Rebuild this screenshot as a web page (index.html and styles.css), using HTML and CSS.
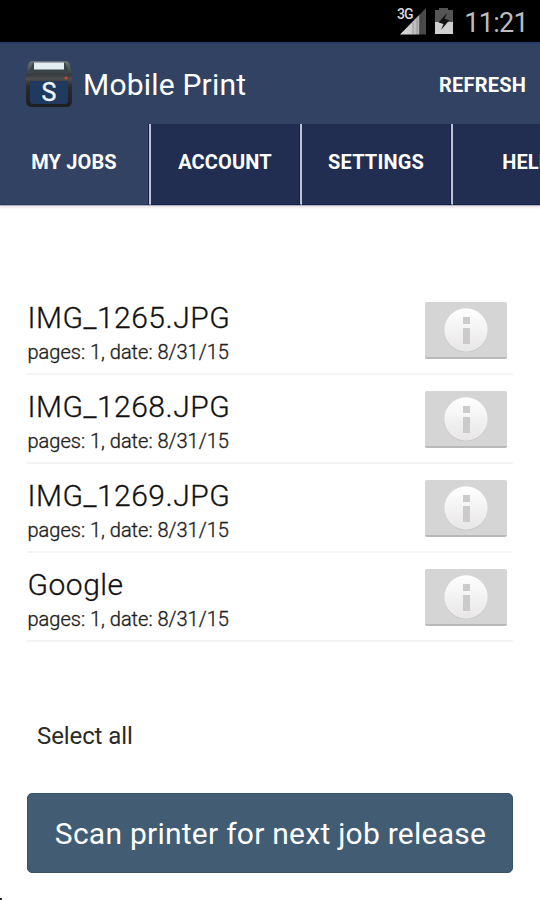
FILE: index.html
```html
<!DOCTYPE html>
<html lang="en">
<head>
<meta charset="utf-8">
<title>Mobile Print</title>
<link rel="stylesheet" href="styles.css">
</head>
<body>
<div class="screen">
  <div class="status">
    <svg class="signal" width="30" height="30" viewBox="0 0 30 30">
      <defs><linearGradient id="sig" x1="0" x2="1"><stop offset="0" stop-color="#e0e0e0"/><stop offset=".5" stop-color="#c8c8c8"/><stop offset=".72" stop-color="#b0b0b0"/><stop offset=".76" stop-color="#454545"/><stop offset="1" stop-color="#4c4c4c"/></linearGradient></defs>
      <path d="M3 28.500L29 2v26.500z" fill="url(#sig)"/>
      <path d="M16 16v12M20 12v16" stroke="#999" stroke-width="1"/>
      <text x="0" y="13" class="net">3G</text>
    </svg>
    <svg class="battery" width="20" height="28" viewBox="0 0 20 28">
      <path d="M5 1h9v2h5v12H1V3h4z" fill="#555"/>
      <path d="M1 15h18v12H1z" fill="#d0d0d0"/>
      <path d="M13 6L4.500 15.500 9.500 17 7 23l8.500-10-5-1z" fill="#111"/>
    </svg>
    <span class="clock">11:21</span>
  </div>
  <header class="bar">
    <svg class="logo" width="48" height="48" viewBox="0 0 48 48">
      <defs><linearGradient id="lg" x1="0" y1="0" x2="0" y2="1"><stop offset="0" stop-color="#6b767e"/><stop offset=".3" stop-color="#343a3e"/><stop offset=".38" stop-color="#4c4e4e"/><stop offset=".55" stop-color="#292c2e"/><stop offset="1" stop-color="#1c1f22"/></linearGradient></defs>
      <path d="M8 1h32q4 0 5 4l2 10v26q0 6-6 6H7q-6 0-6-6V15L3 5q1-4 5-4z" fill="url(#lg)"/>
      <path d="M8 3h32l4 9H4z" fill="#39434a"/>
      <path d="M9 2.500h30V9.500H9z" fill="#e2eef2"/>
      <path d="M5 21h38v20q0 3-3 3H8q-3 0-3-3z" fill="#1f3a5e"/>
      <circle cx="41" cy="18" r="1.500" fill="#d3462c"/>
      <text x="24" y="41" class="mark">S</text>
    </svg>
    <h1 class="title">Mobile Print</h1>
    <span class="refresh">REFRESH</span>
  </header>
  <nav class="tabs">
    <span class="tab active">MY JOBS</span><span class="tab">ACCOUNT</span><span class="tab">SETTINGS</span><span class="tab">HELP</span>
  </nav>
  <main class="content">
    <svg width="0" height="0" class="defs"><defs>
      <linearGradient id="disc" x1="0" y1="0" x2="0" y2="1"><stop offset="0" stop-color="#fff"/><stop offset="1" stop-color="#e8e6e7"/></linearGradient>
      <symbol id="info" viewBox="0 0 46 46"><circle cx="23" cy="23.700" r="21.600" fill="#c3c3c3"/><circle cx="23" cy="23" r="21.700" fill="url(#disc)"/><path d="M20 10h7v7h-7zM20 21h7v16h-7z" fill="#cbcbcb"/></symbol>
    </defs></svg>
    <ul class="jobs">
      <li class="job"><div class="text"><div class="name">IMG_1265.JPG</div><div class="meta">pages: 1, date: 8/31/15</div></div><div class="info"><svg width="46" height="46"><use href="#info"/></svg></div></li>
      <li class="job"><div class="text"><div class="name">IMG_1268.JPG</div><div class="meta">pages: 1, date: 8/31/15</div></div><div class="info"><svg width="46" height="46"><use href="#info"/></svg></div></li>
      <li class="job"><div class="text"><div class="name">IMG_1269.JPG</div><div class="meta">pages: 1, date: 8/31/15</div></div><div class="info"><svg width="46" height="46"><use href="#info"/></svg></div></li>
      <li class="job"><div class="text"><div class="name">Google</div><div class="meta">pages: 1, date: 8/31/15</div></div><div class="info"><svg width="46" height="46"><use href="#info"/></svg></div></li>
    </ul>
    <div class="select">Select all</div>
    <div class="scan">Scan printer for next job release</div>
  </main>
  <div class="speck"></div>
</div>
</body>
</html>
```
FILE: styles.css
```css
* { box-sizing: border-box; }
body { margin: 0; font-family: Roboto, "Liberation Sans", sans-serif; background: #fff; }
.screen { width: 540px; height: 900px; overflow: hidden; display: flex; flex-direction: column; position: relative; }
.status { height: 42px; flex: none; background: #000; display: flex; justify-content: flex-end; align-items: center; padding: 0 12px 0 0; }
.signal { margin: 0 7px 0 0; }
.net { font-size: 14px; font-weight: 500; fill: #d8d8d8; stroke: #000; stroke-width: 2px; paint-order: stroke; letter-spacing: -1px; }
.battery { margin-right: 10px; }
.clock { font-size: 27px; line-height: 42px; color: #bdbdbd; padding-top: 3px; letter-spacing: -0.7px; }
.bar { height: 82px; flex: none; background: #314263; border-top: 2px solid #293a66; display: flex; align-items: center; padding: 0 14px 0 25px; }
.logo { flex: none; }
.mark { font-size: 25px; fill: #eef4fb; stroke: #eef4fb; stroke-width: .4px; text-anchor: middle; }
.title { margin: 2px 0 0 10px; font-size: 30px; line-height: 40px; font-weight: 400; color: #fff; letter-spacing: .2px; }
.refresh { margin-left: auto; margin-top: 1px; font-size: 20px; font-weight: 700; color: #fff; line-height: 40px; letter-spacing: .2px; }
.tabs { height: 82px; flex: none; display: flex; background: #212e52; border-bottom: 1px solid #b0b0bd; overflow: hidden; box-shadow: 0 2px 2px #eee8ea; }
.tab { width: 151px; flex: none; border-right: 2px solid #bfc2d2; box-shadow: inset -1px 0 #141f4e; border-bottom: 1px solid #141f4e; color: #fff; font-size: 20px; font-weight: 700; line-height: 76px; text-align: center; letter-spacing: .15px; padding-right: 1px; }
.active { width: 151px; background: #314263; border-bottom-color: #233762; }
.content { padding: 80px 27px 0; }
.defs { display: block; }
.jobs { list-style: none; margin: 0; padding: 0; }
.job { height: 89px; border-bottom: 2px solid #f4f4f4; display: flex; justify-content: space-between; padding: 11px 6px 0 0; }
.name { margin-left: .5px; font-size: 30px; line-height: 41px; color: #111; font-weight: 300; letter-spacing: .5px; -webkit-text-stroke: .3px #111; }
.meta { margin: -1px 0 0 .5px; font-size: 20px; line-height: 30px; color: #222; font-weight: 300; letter-spacing: 0; -webkit-text-stroke: .35px #222; }
.info { width: 82px; height: 57px; margin-top: 5px; background: #d5d5d5; border-radius: 2px; border-bottom: 2px solid #b9b9b9; display: flex; justify-content: center; align-items: center; }
.select { margin: 77px 0 0 10px; font-size: 24px; line-height: 34px; color: #2a2a2a; letter-spacing: -.1px; }
.scan { margin-top: 40px; height: 80px; background: #415c73; border: 1px solid #345268; border-radius: 5px; color: #fff; font-size: 30px; line-height: 79px; text-align: center; letter-spacing: .25px; padding-left: 1px; }
.speck { position: absolute; left: 0; top: 898px; width: 2px; height: 2px; background: #222; }
```
